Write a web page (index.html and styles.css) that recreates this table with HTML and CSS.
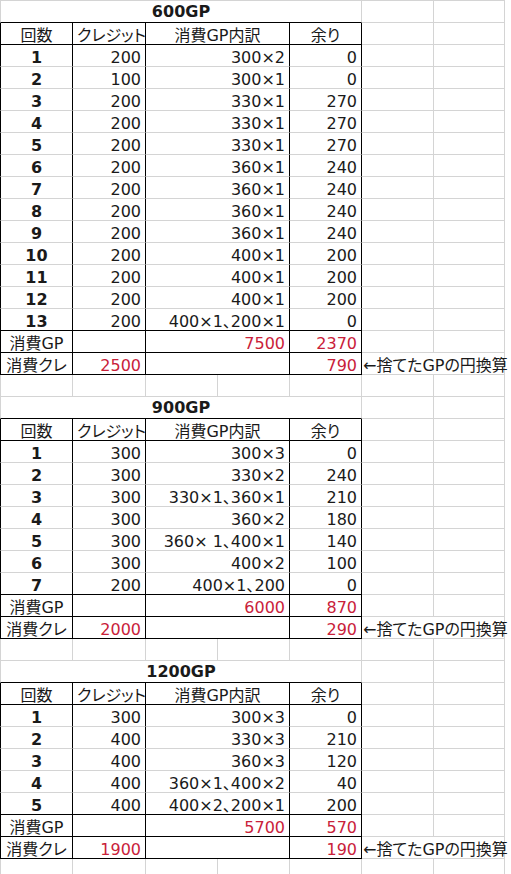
FILE: index.html
```html
<!DOCTYPE html>
<html lang="ja">
<head>
<meta charset="utf-8">
<title>GP</title>
<link rel="stylesheet" href="styles.css">
</head>
<body>
<div class="sheet">
<!-- 600GP -->
<div class="c a top title s5 bb">600GP</div><div class="c top"></div><div class="c top"></div>
<div class="c a t bb ctr">回数</div><div class="c t bb ctr">クレジット</div><div class="c t bb ctr s2">消費GP内訳</div><div class="c t bb ctr">余り</div><div class="c"></div><div class="c"></div>
<div class="c a t ctr b">1</div><div class="c t r">200</div><div class="c t r s2">300×2</div><div class="c t r">0</div><div class="c"></div><div class="c"></div>
<div class="c a t ctr b">2</div><div class="c t r">100</div><div class="c t r s2">300×1</div><div class="c t r">0</div><div class="c"></div><div class="c"></div>
<div class="c a t ctr b">3</div><div class="c t r">200</div><div class="c t r s2">330×1</div><div class="c t r">270</div><div class="c"></div><div class="c"></div>
<div class="c a t ctr b">4</div><div class="c t r">200</div><div class="c t r s2">330×1</div><div class="c t r">270</div><div class="c"></div><div class="c"></div>
<div class="c a t ctr b">5</div><div class="c t r">200</div><div class="c t r s2">330×1</div><div class="c t r">270</div><div class="c"></div><div class="c"></div>
<div class="c a t ctr b">6</div><div class="c t r">200</div><div class="c t r s2">360×1</div><div class="c t r">240</div><div class="c"></div><div class="c"></div>
<div class="c a t ctr b">7</div><div class="c t r">200</div><div class="c t r s2">360×1</div><div class="c t r">240</div><div class="c"></div><div class="c"></div>
<div class="c a t ctr b">8</div><div class="c t r">200</div><div class="c t r s2">360×1</div><div class="c t r">240</div><div class="c"></div><div class="c"></div>
<div class="c a t ctr b">9</div><div class="c t r">200</div><div class="c t r s2">360×1</div><div class="c t r">240</div><div class="c"></div><div class="c"></div>
<div class="c a t ctr b">10</div><div class="c t r">200</div><div class="c t r s2">400×1</div><div class="c t r">200</div><div class="c"></div><div class="c"></div>
<div class="c a t ctr b">11</div><div class="c t r">200</div><div class="c t r s2">400×1</div><div class="c t r">200</div><div class="c"></div><div class="c"></div>
<div class="c a t ctr b">12</div><div class="c t r">200</div><div class="c t r s2">400×1</div><div class="c t r">200</div><div class="c"></div><div class="c"></div>
<div class="c a t bb ctr b">13</div><div class="c t bb r">200</div><div class="c t bb r s2">400×1、200×1</div><div class="c t bb r">0</div><div class="c"></div><div class="c"></div>
<div class="c a t bb ctr">消費GP</div><div class="c t bb"></div><div class="c t bb r s2 red">7500</div><div class="c t bb r red">2370</div><div class="c"></div><div class="c"></div>
<div class="c a t bb ctr">消費クレ</div><div class="c t bb r red">2500</div><div class="c t bb s2"></div><div class="c t bb r red">790</div><div class="c note">←捨てたGPの円換算</div>
<div class="c a"></div><div class="c"></div><div class="c"></div><div class="c"></div><div class="c"></div><div class="c"></div><div class="c"></div>
<!-- 900GP -->
<div class="c a title s5 bb">900GP</div><div class="c"></div><div class="c"></div>
<div class="c a t bb ctr">回数</div><div class="c t bb ctr">クレジット</div><div class="c t bb ctr s2">消費GP内訳</div><div class="c t bb ctr">余り</div><div class="c"></div><div class="c"></div>
<div class="c a t ctr b">1</div><div class="c t r">300</div><div class="c t r s2">300×3</div><div class="c t r">0</div><div class="c"></div><div class="c"></div>
<div class="c a t ctr b">2</div><div class="c t r">300</div><div class="c t r s2">330×2</div><div class="c t r">240</div><div class="c"></div><div class="c"></div>
<div class="c a t ctr b">3</div><div class="c t r">300</div><div class="c t r s2">330×1、360×1</div><div class="c t r">210</div><div class="c"></div><div class="c"></div>
<div class="c a t ctr b">4</div><div class="c t r">300</div><div class="c t r s2">360×2</div><div class="c t r">180</div><div class="c"></div><div class="c"></div>
<div class="c a t ctr b">5</div><div class="c t r">300</div><div class="c t r s2">360× 1、400×1</div><div class="c t r">140</div><div class="c"></div><div class="c"></div>
<div class="c a t ctr b">6</div><div class="c t r">300</div><div class="c t r s2">400×2</div><div class="c t r">100</div><div class="c"></div><div class="c"></div>
<div class="c a t bb ctr b">7</div><div class="c t bb r">200</div><div class="c t bb r s2">400×1、200</div><div class="c t bb r">0</div><div class="c"></div><div class="c"></div>
<div class="c a t bb ctr">消費GP</div><div class="c t bb"></div><div class="c t bb r s2 red">6000</div><div class="c t bb r red">870</div><div class="c"></div><div class="c"></div>
<div class="c a t bb ctr">消費クレ</div><div class="c t bb r red">2000</div><div class="c t bb s2"></div><div class="c t bb r red">290</div><div class="c note">←捨てたGPの円換算</div>
<div class="c a"></div><div class="c"></div><div class="c"></div><div class="c"></div><div class="c"></div><div class="c"></div><div class="c"></div>
<!-- 1200GP -->
<div class="c a title s5 bb">1200GP</div><div class="c"></div><div class="c"></div>
<div class="c a t bb ctr">回数</div><div class="c t bb ctr">クレジット</div><div class="c t bb ctr s2">消費GP内訳</div><div class="c t bb ctr">余り</div><div class="c"></div><div class="c"></div>
<div class="c a t ctr b">1</div><div class="c t r">300</div><div class="c t r s2">300×3</div><div class="c t r">0</div><div class="c"></div><div class="c"></div>
<div class="c a t ctr b">2</div><div class="c t r">400</div><div class="c t r s2">330×3</div><div class="c t r">210</div><div class="c"></div><div class="c"></div>
<div class="c a t ctr b">3</div><div class="c t r">400</div><div class="c t r s2">360×3</div><div class="c t r">120</div><div class="c"></div><div class="c"></div>
<div class="c a t ctr b">4</div><div class="c t r">400</div><div class="c t r s2">360×1、400×2</div><div class="c t r">40</div><div class="c"></div><div class="c"></div>
<div class="c a t bb ctr b">5</div><div class="c t bb r">400</div><div class="c t bb r s2">400×2、200×1</div><div class="c t bb r">200</div><div class="c"></div><div class="c"></div>
<div class="c a t bb ctr">消費GP</div><div class="c t bb"></div><div class="c t bb r s2 red">5700</div><div class="c t bb r red">570</div><div class="c"></div><div class="c"></div>
<div class="c a t bb ctr">消費クレ</div><div class="c t bb r red">1900</div><div class="c t bb s2"></div><div class="c t bb r red">190</div><div class="c note">←捨てたGPの円換算</div>
<div class="c a last"></div><div class="c last"></div><div class="c last"></div><div class="c last"></div><div class="c last"></div><div class="c last"></div><div class="c last"></div>
</div>
</body>
</html>
```

FILE: styles.css
```css
html, body {
  margin: 0;
  padding: 0;
  background: #fff;
  overflow: hidden;
}
body {
  font-family: "DejaVu Sans", "Noto Sans CJK JP", sans-serif;
  font-size: 16px;
  color: #1a1a1a;
  font-feature-settings: "palt" 1;
}
.sheet {
  display: grid;
  grid-template-columns: 73px 73px 72px 72px 72px 72px 71px;
  grid-template-rows: 23px repeat(38, 22px) 16px;
  width: 505px;
}
.c {
  box-sizing: border-box;
  border-right: 1px solid #d4d4d4;
  border-bottom: 1px solid #d4d4d4;
  padding: 4px 4px 0;
  line-height: 17px;
  white-space: nowrap;
}
.a { border-left: 1px solid #d4d4d4; }
.top { border-top: 1px solid #d4d4d4; }
.t { border-right-color: #000; }
.a.t { border-left-color: #000; }
.bb { border-bottom-color: #000; }
.s2 { grid-column: span 2; }
.s5 { grid-column: span 5; }
.ctr { text-align: center; }
.r { text-align: right; }
.b { font-weight: bold; }
.red { color: #c9213a; }
.title {
  font-weight: bold;
  text-align: center;
  padding-top: 2px;
}
.note {
  grid-column: span 2;
  padding-left: 1px;
}
.last { border-bottom: none; }
```
